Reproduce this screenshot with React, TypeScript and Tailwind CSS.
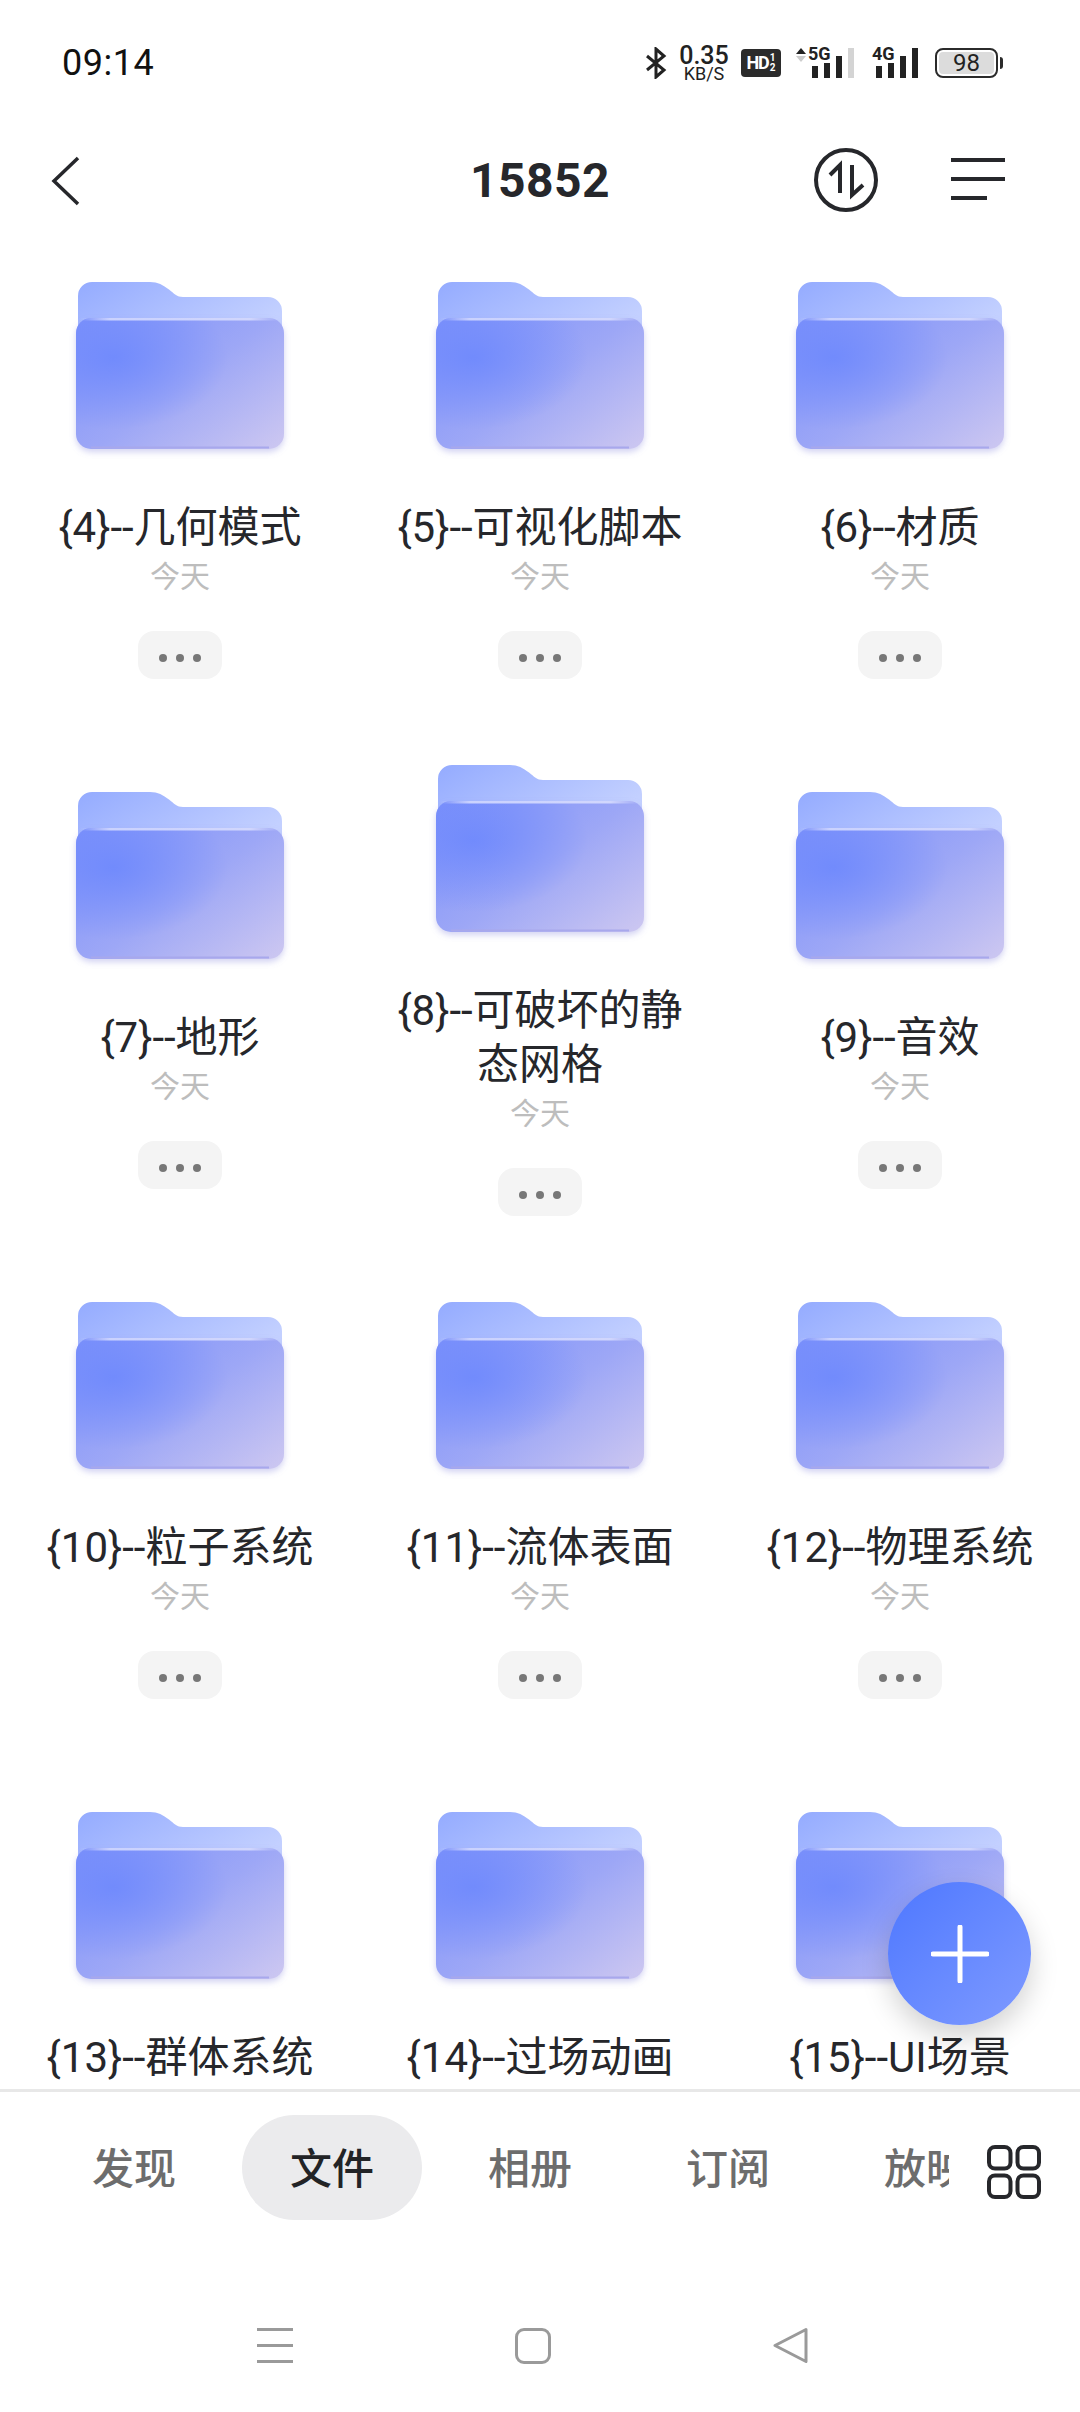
const FONT = "font-['Roboto','Noto_Sans_CJK_SC',sans-serif]";

const FOLDERS = [
  "{4}--几何模式",
  "{5}--可视化脚本",
  "{6}--材质",
  "{7}--地形",
  "{8}--可破坏的静态网格",
  "{9}--音效",
  "{10}--粒子系统",
  "{11}--流体表面",
  "{12}--物理系统",
  "{13}--群体系统",
  "{14}--过场动画",
  "{15}--UI场景",
];

const TABS = ["发现", "文件", "相册", "订阅", "放映"];

function FolderIcon() {
  return (
    <svg width="224" height="180" viewBox="0 0 224 180" className="block">
      <defs>
        <linearGradient id="folderBack" x1="0" y1="0" x2="1" y2="0.5">
          <stop offset="0" stopColor="#94abff" />
          <stop offset="1" stopColor="#c3d0ff" />
        </linearGradient>
        <linearGradient id="folderFront" x1="0" y1="0.1" x2="1" y2="0.95">
          <stop offset="0" stopColor="#7f93fa" />
          <stop offset="0.5" stopColor="#9da7f6" />
          <stop offset="1" stopColor="#cbc6f1" />
        </linearGradient>
        <radialGradient id="folderGlow" cx="0.18" cy="0.3" r="0.55">
          <stop offset="0" stopColor="#6d88fd" stopOpacity="0.85" />
          <stop offset="1" stopColor="#6d88fd" stopOpacity="0" />
        </radialGradient>
        <linearGradient id="folderEdge" x1="0" y1="0" x2="1" y2="0">
          <stop offset="0" stopColor="#dfe3ff" stopOpacity="0" />
          <stop offset="0.15" stopColor="#dfe3ff" stopOpacity="0.8" />
          <stop offset="0.85" stopColor="#dfe3ff" stopOpacity="0.8" />
          <stop offset="1" stopColor="#dfe3ff" stopOpacity="0" />
        </linearGradient>
        <filter id="folderShadow" x="-10%" y="-10%" width="120%" height="125%">
          <feDropShadow dx="0" dy="3" stdDeviation="3" floodColor="#8f8fe0" floodOpacity="0.4" />
        </filter>
      </defs>
      <path
        d="M10 15a14 14 0 0 1 14-14h58c8 0 13 3 19 7.500c5 4 8 7.500 14 7.500h85a14 14 0 0 1 14 14v30H10z"
        fill="url(#folderBack)"
      />
      <g filter="url(#folderShadow)">
        <rect x="8" y="37" width="208" height="131" rx="15" fill="url(#folderFront)" />
      </g>
      <rect x="8" y="37" width="208" height="131" rx="15" fill="url(#folderGlow)" />
      <rect x="12" y="37" width="200" height="2.500" rx="1.250" fill="url(#folderEdge)" />
      <path d="M23 166.500h178" stroke="#a8a8ec" strokeWidth="2" />
    </svg>
  );
}

function FolderCell({ name }: { name: string }) {
  return (
    <div className="flex flex-col items-center">
      <FolderIcon />
      <div className="mt-10 w-[300px] text-center text-[42px] leading-[54px] text-[#26272b]">{name}</div>
      <div className="mt-[2px] text-[30px] leading-[40px] text-[#bdbdbd]">今天</div>
      <div className="mt-[34px] flex h-12 w-[84px] items-center justify-center gap-[9px] rounded-2xl bg-[#f4f4f4] pt-[5px]">
        <span className="size-2 rounded-full bg-[#777777]" />
        <span className="size-2 rounded-full bg-[#777777]" />
        <span className="size-2 rounded-full bg-[#777777]" />
      </div>
    </div>
  );
}

function Bars({ dim }: { dim?: boolean }) {
  return (
    <div className="flex items-end gap-[6px]">
      <span className="h-[12px] w-[6px] bg-[#222222]" />
      <span className="h-[15px] w-[6px] bg-[#222222]" />
      <span className="h-[22px] w-[6px] bg-[#222222]" />
      <span className={`h-[30px] w-[6px] ${dim ? "bg-[#d4d4d4]" : "bg-[#222222]"}`} />
    </div>
  );
}

function StatusBar() {
  return (
    <div className="flex h-[126px] items-center justify-between pl-[62px] pr-[77px]">
      <span className="text-[36px] tracking-[0.5px] text-[#111111]">09:14</span>
      <div className="flex items-center">
        <svg width="22" height="32" viewBox="0 0 22 32" fill="none" stroke="#222222" strokeWidth="3">
          <path d="M2 9l17 14-8 7V2l8 7L2 23" />
        </svg>
        <div className="ml-[12px] flex w-[50px] flex-col items-center text-[#222222]">
          <span className="text-[25px] leading-[20px] font-medium">0.35</span>
          <span className="text-[18px] leading-[15px]">KB/S</span>
        </div>
        <div className="ml-[12px] flex h-[28px] w-[40px] items-center justify-center gap-[1px] rounded-[4px] bg-[#2b2b2b] text-white">
          <span className="text-[18px] leading-none font-bold tracking-[-1px]">HD</span>
          <span className="flex flex-col text-[10px] leading-[10px] font-bold">
            <span>1</span>
            <span>2</span>
          </span>
        </div>
        <div className="ml-[15px] flex items-end">
          <div className="mb-[16px] flex flex-col gap-[2px]">
            <span className="size-0 border-x-[5px] border-b-[6px] border-x-transparent border-b-[#222222]" />
            <span className="size-0 border-x-[5px] border-t-[6px] border-x-transparent border-t-[#cccccc]" />
          </div>
          <div className="relative ml-[6px]">
            <span className="absolute -top-[3px] -left-[4px] text-[18px] leading-[18px] font-bold text-[#222222]">5G</span>
            <Bars dim />
          </div>
        </div>
        <div className="relative ml-[22px]">
          <span className="absolute -top-[3px] -left-[4px] text-[18px] leading-[18px] font-bold text-[#222222]">4G</span>
          <Bars />
        </div>
        <div className="ml-[17px] flex items-center">
          <div className="flex h-[30px] w-[63px] items-center rounded-[8px] border-[2px] border-[#2b2b2b] p-[2px]">
            <div className="flex h-full w-full items-center justify-center rounded-[4px] bg-[#dcdcdc] text-[24px] leading-none text-[#222222]">
              98
            </div>
          </div>
          <span className="ml-[2px] h-[12px] w-[3px] rounded-r-sm bg-[#2b2b2b]" />
        </div>
      </div>
    </div>
  );
}

function TitleBar() {
  return (
    <div className="relative mt-[10px] flex h-[89px] items-center justify-center">
      <svg width="32" height="50" viewBox="0 0 32 50" fill="none" stroke="#26272b" strokeWidth="3.500" className="absolute left-[50px] top-[20px]">
        <path d="M28 2 4 25l24 23" />
      </svg>
      <span className="text-[48px] font-bold tracking-[0.5px] text-[#26272b]">15852</span>
      <svg width="66" height="66" viewBox="0 0 66 66" fill="none" stroke="#26272b" strokeWidth="4" className="absolute left-[813px] top-[11px]">
        <circle cx="33" cy="33" r="30" />
        <path d="M27 46V18L17 28M39 18v30l11-10" />
      </svg>
      <div className="absolute left-[951px] top-[22px] flex w-[54px] flex-col gap-[15px]">
        <span className="h-[4px] w-full bg-[#26272b]" />
        <span className="h-[4px] w-full bg-[#26272b]" />
        <span className="h-[4px] w-[36px] bg-[#26272b]" />
      </div>
    </div>
  );
}

function BottomNav() {
  return (
    <div className="flex h-[323px] flex-col border-t-[3px] border-[#e8e8e8] bg-white">
      <div className="mt-[23px] flex h-[105px] items-center">
        <div className="ml-[44px] flex w-[905px] gap-[18px] overflow-hidden">
          {TABS.map((tab, i) => (
            <div
              key={tab}
              className={`flex h-[105px] w-[180px] shrink-0 items-center justify-center rounded-full pt-[4px] text-[42px] font-medium ${
                i === 1 ? "bg-[#ebebed] text-[#222326]" : "text-[#6d6d6d]"
              }`}
            >
              {tab}
            </div>
          ))}
        </div>
        <svg width="54" height="54" viewBox="0 0 54 54" fill="none" stroke="#26272b" strokeWidth="4" className="ml-[38px] mt-[9px]">
          <rect x="2" y="2" width="21.500" height="21.500" rx="6" />
          <rect x="30.500" y="2" width="21.500" height="21.500" rx="6" />
          <rect x="2" y="30.500" width="21.500" height="21.500" rx="6" />
          <rect x="30.500" y="30.500" width="21.500" height="21.500" rx="6" />
        </svg>
      </div>
      <div className="mt-[107px] flex items-center justify-between pl-[257px] pr-[272px]">
        <div className="flex w-[36px] flex-col gap-[13px]">
          <span className="h-[3px] bg-[#9a9a9a]" />
          <span className="h-[3px] bg-[#9a9a9a]" />
          <span className="h-[3px] bg-[#9a9a9a]" />
        </div>
        <span className="size-[36px] rounded-[9px] border-[3px] border-[#9a9a9a]" />
        <svg width="35" height="37" viewBox="0 0 35 37" fill="none" stroke="#9a9a9a" strokeWidth="3" strokeLinejoin="round">
          <path d="M33 2.500 2 18.500l31 16z" />
        </svg>
      </div>
    </div>
  );
}

export default function App() {
  return (
    <div className={`relative flex h-[2412px] w-[1080px] flex-col overflow-hidden bg-white ${FONT}`}>
      <StatusBar />
      <TitleBar />
      <div className="h-[1864px] overflow-hidden">
        <div className="grid auto-rows-[510px] grid-cols-3 items-center">
          {FOLDERS.map((name) => (
            <FolderCell key={name} name={name} />
          ))}
        </div>
      </div>
      <BottomNav />
      <div className="absolute left-[888px] top-[1882px] flex size-[143px] items-center justify-center rounded-full bg-gradient-to-br from-[#4e77ff] to-[#7f9aff] shadow-[0_12px_28px_rgba(0,0,0,0.18)]">
        <svg width="58" height="58" viewBox="0 0 58 58" stroke="white" strokeWidth="5" strokeLinecap="round">
          <path d="M29 2v54M2 29h54" />
        </svg>
      </div>
    </div>
  );
}
